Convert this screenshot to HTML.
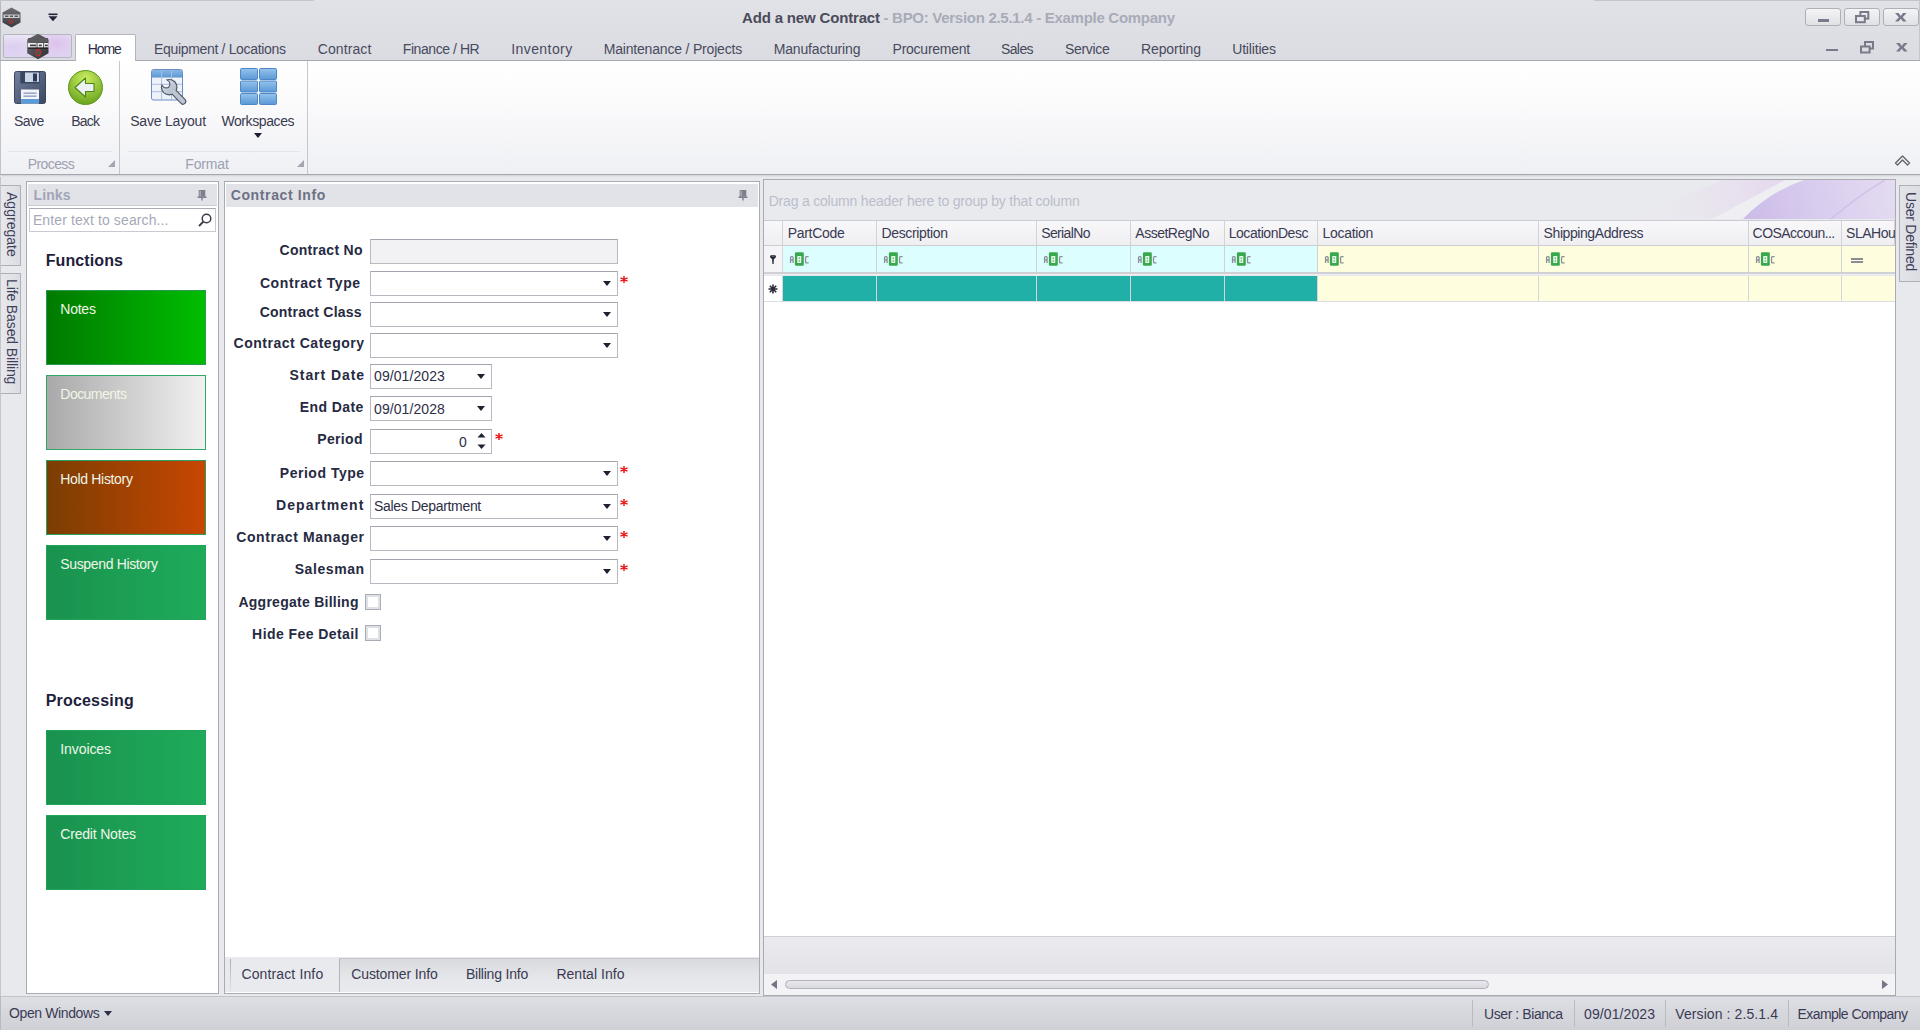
<!DOCTYPE html>
<html><head><meta charset="utf-8"><style>
*{box-sizing:border-box;margin:0;padding:0}
html,body{width:1920px;height:1030px;overflow:hidden}
body{position:relative;background:#e8e9ed;font-family:"Liberation Sans",sans-serif;color:#3b3b50}
.a{position:absolute;white-space:nowrap}
svg.a{overflow:visible}
.wb{top:7.5px;width:36px;height:18.5px;border:1px solid #aeb0b8;border-radius:3px;background:linear-gradient(#f4f4f6,#e0e1e5)}
.gsep{top:61px;width:1px;height:113px;background:#c6c7ce}
.panel{background:#fff;border:1px solid #a9abb3}
.phdr{background:#e2e3e8}
.fld{left:370px;width:248px;height:25px;border:1px solid #b8bac1;border-top-color:#a3a5ae;background:#fff}
.dd{position:absolute;right:6.5px;top:9px;width:0;height:0;border-left:4px solid transparent;border-right:4px solid transparent;border-top:5px solid #202030}
.tile{left:46px;width:160px;height:75px;border:1px solid #2aa860}
.ghdr{top:221px;height:25px;background:linear-gradient(#f8f8fa,#efeff2);border-right:1px solid #d2d3d9;border-bottom:1px solid #cdced4;overflow:hidden}
.gflt{top:246px;height:26px;background:#dcfefe;border-right:1px solid #d0d2d8}
.gnew{top:276px;height:25px;background:#20b0a8;border-right:1px solid #d4d6da}
.abc{position:absolute;left:6px;top:6px}
.ssep{top:1000px;width:1px;height:27px;background:#babbc2}
</style></head><body>
<div class="a" style="left:0;top:0;width:1920px;height:61px;background:linear-gradient(#e1e2e7,#dbdce1);border-left:1px solid #b9bac1"></div><div class="a" style="left:0;top:0;width:314px;height:1px;background:#c4c5cb"></div><div class="a" style="left:1594px;top:0;width:326px;height:1px;background:#c4c5cb"></div>
<svg class="a" style="left:2px;top:7px" width="19" height="21" viewBox="0 0 19 21">
 <defs><linearGradient id="hx1" x1="0" y1="0" x2="0" y2="1"><stop offset="0" stop-color="#707074"/><stop offset="1" stop-color="#3a3a3e"/></linearGradient></defs>
 <polygon points="9.5,0.5 18.5,5.5 18.5,15.5 9.5,20.5 0.5,15.5 0.5,5.5" fill="url(#hx1)"/>
 <rect x="1.5" y="7.5" width="16" height="3.5" fill="#cfcfd2"/>
 <rect x="3" y="8.5" width="3.5" height="1.5" fill="#58585c"/><rect x="8" y="8.5" width="3" height="1.5" fill="#58585c"/><rect x="12.5" y="8.5" width="3.5" height="1.5" fill="#58585c"/>
 <circle cx="8.8" cy="14.6" r="2" fill="#505054" stroke="#c02828" stroke-width="1"/>
</svg>
<svg class="a" style="left:48px;top:13px" width="10" height="9" viewBox="0 0 10 9">
 <rect x="0.5" y="0.5" width="9" height="1.6" fill="#23233a"/><polygon points="0.5,3.2 9.5,3.2 5,8.2" fill="#23233a"/></svg>
<div class="a" style="left:742.00px;top:10.30px;font-size:15px;line-height:1;letter-spacing:-0.168px;color:#4b4b5a;font-weight:bold;">Add a new Contract</div>
<div class="a" style="left:883.50px;top:10.30px;font-size:15px;line-height:1;letter-spacing:-0.285px;color:#a8abb8;font-weight:bold;">- BPO: Version 2.5.1.4 - Example Company</div>
<div class="a wb" style="left:1805px"><div class="a" style="left:11.5px;top:10.5px;width:11.5px;height:2.5px;background:#787a89"></div></div>
<div class="a wb" style="left:1844px"><svg class="a" style="left:10px;top:2.5px" width="15" height="13" viewBox="0 0 15 13"><rect x="5.4" y="1" width="7.9" height="6.6" fill="none" stroke="#787a89" stroke-width="2"/><rect x="1" y="5" width="8.8" height="6.2" fill="#e9e9ed" stroke="#787a89" stroke-width="2"/></svg></div>
<div class="a wb" style="left:1883px"><svg class="a" style="left:11px;top:4px" width="12" height="9" viewBox="0 0 12 9"><polygon points="0,0 3.6,0 5.8,2.9 8,0 11.6,0 7.7,4.3 11.6,8.6 8,8.6 5.8,5.7 3.6,8.6 0,8.6 3.9,4.3" fill="#787a89"/></svg></div>
<div class="a" style="left:1919px;top:0;width:1px;height:60px;background:#c6c7ce"></div>
<div class="a" style="left:0;top:60px;width:1920px;height:1px;background:#a8aab2"></div>
<div class="a" style="left:3px;top:34px;width:69px;height:24px;border:1px solid #b4b6be;border-radius:2px;background:radial-gradient(ellipse 30px 18px at 52px 8px,#dcc2ec 0%,rgba(220,194,236,0) 100%),radial-gradient(ellipse 30px 12px at 10px 12px,#dccdf0 0%,rgba(220,205,240,0) 100%),linear-gradient(#ece6f6,#ddd6f2)"></div>
<svg class="a" style="left:26px;top:33px" width="24" height="27" viewBox="0 0 24 27">
 <defs><linearGradient id="hx2" x1="0" y1="0" x2="1" y2="1"><stop offset="0" stop-color="#6e6e72"/><stop offset="0.6" stop-color="#48484c"/><stop offset="1" stop-color="#2e2e32"/></linearGradient></defs>
 <polygon points="12,0.8 22.5,6.6 22.5,20.2 12,26.2 1.2,20.2 1.2,6.6" fill="url(#hx2)"/>
 <rect x="2" y="5" width="20" height="4" fill="#5a5a5e"/>
 <path d="M1.8 10 H10.5 V14.6 H1.8 Z M11.5 10 H17 V14.6 H11.5 Z M17.8 10 H22.5 V14.6 H17.8 Z" fill="#ededef"/>
 <rect x="4" y="11.6" width="6" height="1.6" fill="#3a3a3e"/><rect x="12.8" y="11.6" width="3" height="1.6" fill="#3a3a3e"/><rect x="18.8" y="11.6" width="3" height="1.6" fill="#3a3a3e"/>
 <rect x="2" y="14.6" width="20" height="1.2" fill="#1e1e22"/>
 <ellipse cx="12.2" cy="19.6" rx="2.2" ry="3.4" fill="#3a5a5c" stroke="#d42828" stroke-width="1.1"/>
</svg>
<div class="a" style="left:75px;top:34px;width:61px;height:27px;background:#fff;border:1px solid #b3b5bd;border-bottom:none;border-radius:2px 2px 0 0"></div>
<div class="a" style="left:87.80px;top:42.05px;font-size:14px;line-height:1;letter-spacing:-1.136px;color:#2e2e48;">Home</div>
<div class="a" style="left:154.10px;top:42.05px;font-size:14px;line-height:1;letter-spacing:-0.337px;color:#474a5e;">Equipment / Locations</div>
<div class="a" style="left:317.80px;top:42.05px;font-size:14px;line-height:1;letter-spacing:0.083px;color:#474a5e;">Contract</div>
<div class="a" style="left:402.80px;top:42.05px;font-size:14px;line-height:1;letter-spacing:-0.437px;color:#474a5e;">Finance / HR</div>
<div class="a" style="left:511.20px;top:42.05px;font-size:14px;line-height:1;letter-spacing:0.426px;color:#474a5e;">Inventory</div>
<div class="a" style="left:603.70px;top:42.05px;font-size:14px;line-height:1;letter-spacing:-0.186px;color:#474a5e;">Maintenance / Projects</div>
<div class="a" style="left:773.70px;top:42.05px;font-size:14px;line-height:1;letter-spacing:-0.160px;color:#474a5e;">Manufacturing</div>
<div class="a" style="left:892.60px;top:42.05px;font-size:14px;line-height:1;letter-spacing:-0.256px;color:#474a5e;">Procurement</div>
<div class="a" style="left:1000.90px;top:42.05px;font-size:14px;line-height:1;letter-spacing:-0.583px;color:#474a5e;">Sales</div>
<div class="a" style="left:1065.00px;top:42.05px;font-size:14px;line-height:1;letter-spacing:-0.315px;color:#474a5e;">Service</div>
<div class="a" style="left:1140.90px;top:42.05px;font-size:14px;line-height:1;letter-spacing:-0.075px;color:#474a5e;">Reporting</div>
<div class="a" style="left:1232.20px;top:42.05px;font-size:14px;line-height:1;letter-spacing:-0.166px;color:#474a5e;">Utilities</div>
<div class="a" style="left:1826px;top:48.5px;width:12px;height:2.5px;background:#787a89"></div>
<svg class="a" style="left:1860px;top:41px" width="14" height="13" viewBox="0 0 14 13"><rect x="5" y="1" width="8" height="6.5" fill="none" stroke="#787a89" stroke-width="2"/><rect x="1" y="5.5" width="8.6" height="6" fill="#dcdde2" stroke="#787a89" stroke-width="2"/></svg>
<svg class="a" style="left:1896px;top:42.5px" width="12" height="9" viewBox="0 0 12 9"><polygon points="0,0 3.6,0 5.8,2.9 8,0 11.6,0 7.7,4.3 11.6,8.6 8,8.6 5.8,5.7 3.6,8.6 0,8.6 3.9,4.3" fill="#787a89"/></svg>
<div class="a" style="left:0;top:61px;width:1920px;height:114px;background:linear-gradient(#ffffff 0%,#fbfbfc 35%,#eff0f4 100%);border-bottom:1px solid #a5a7af;border-left:1px solid #c2c3ca"></div><div class="a" style="left:0;top:175px;width:1920px;height:2px;background:linear-gradient(#d0d1d7,#e8e9ed)"></div>
<div class="a gsep" style="left:119px"></div><div class="a gsep" style="left:307px"></div>
<div class="a" style="left:8px;top:151px;width:104px;height:1px;background:#e4e5ea"></div>
<div class="a" style="left:128px;top:151px;width:172px;height:1px;background:#e4e5ea"></div>
<div class="a" style="left:27.80px;top:156.75px;font-size:14px;line-height:1;letter-spacing:-0.613px;color:#9ca1b1;">Process</div>
<div class="a" style="left:185.30px;top:157.05px;font-size:14px;line-height:1;letter-spacing:-0.169px;color:#9ca1b1;">Format</div>
<svg class="a" style="left:108px;top:160px" width="7" height="7"><polygon points="7,0 7,7 0,7" fill="#a3a6b1"/></svg>
<svg class="a" style="left:297px;top:160px" width="7" height="7"><polygon points="7,0 7,7 0,7" fill="#a3a6b1"/></svg>
<svg class="a" style="left:14px;top:71px" width="32" height="33" viewBox="0 0 32 33">
 <defs><linearGradient id="sg" x1="0" y1="0" x2="1" y2="1"><stop offset="0" stop-color="#74839f"/><stop offset="0.5" stop-color="#56637f"/><stop offset="1" stop-color="#3c4764"/></linearGradient></defs>
 <rect x="0.5" y="0.5" width="31" height="32" rx="2" fill="url(#sg)" stroke="#3a4662"/>
 <rect x="6.3" y="0.5" width="19.6" height="12" rx="1" fill="#3a4564"/>
 <rect x="11" y="1.5" width="13.9" height="9.5" fill="#cad5e6"/>
 <rect x="19" y="2.5" width="4" height="8" fill="#2c3858"/>
 <rect x="7" y="18.5" width="18" height="14" fill="#f2f4f8"/>
 <rect x="9.5" y="21.5" width="13" height="1.3" fill="#8595c0"/><rect x="9.5" y="24.5" width="13" height="1.3" fill="#8595c0"/>
 <rect x="7" y="28" width="18" height="4.5" fill="#5b9bd8"/>
</svg>
<svg class="a" style="left:68px;top:70px" width="36" height="36" viewBox="0 0 36 36">
 <defs><radialGradient id="bkg" cx="0.5" cy="0.25" r="0.75"><stop offset="0" stop-color="#cdee62"/><stop offset="1" stop-color="#6aa41e"/></radialGradient></defs>
 <circle cx="17.5" cy="17.5" r="17" fill="url(#bkg)" stroke="#5a961a"/>
 <path d="M7 17.5 L17.5 8 L17.5 13.5 L26 13.5 L26 21.5 L17.5 21.5 L17.5 27 Z" fill="#edf1f4" stroke="#4a8616" stroke-width="1.1" stroke-linejoin="round"/>
</svg>
<div class="a" style="left:14.10px;top:114.45px;font-size:14px;line-height:1;letter-spacing:-0.591px;color:#3a3a50;">Save</div>
<div class="a" style="left:71.20px;top:114.45px;font-size:14px;line-height:1;letter-spacing:-0.742px;color:#3a3a50;">Back</div>
<svg class="a" style="left:150px;top:68px" width="38" height="38" viewBox="0 0 38 38">
 <defs>
  <linearGradient id="slh" x1="0" y1="0" x2="0" y2="1"><stop offset="0" stop-color="#86b8e6"/><stop offset="1" stop-color="#5f9ad6"/></linearGradient>
  <mask id="wm1" maskUnits="userSpaceOnUse" x="0" y="0" width="38" height="38"><rect width="38" height="38" fill="#fff"/><circle cx="16.2" cy="16.2" r="3.1" fill="#000"/><polygon points="14,18.4 18.4,14 10,5.6 5.6,10" fill="#000"/></mask>
  <mask id="wm2" maskUnits="userSpaceOnUse" x="0" y="0" width="38" height="38"><rect width="38" height="38" fill="#fff"/><circle cx="16.2" cy="16.2" r="4.2" fill="#000"/><polygon points="13.2,19.2 19.2,13.2 10.5,4.5 4.5,10.5" fill="#000"/></mask>
  <linearGradient id="wrg" x1="0" y1="0" x2="1" y2="1"><stop offset="0" stop-color="#e2e8ee"/><stop offset="1" stop-color="#a8b2c0"/></linearGradient>
 </defs>
 <rect x="1.5" y="1.5" width="31" height="30.5" rx="2" fill="#eef2f9" stroke="#6e8cc6"/>
 <path d="M2 2 H32 V9 H2 Z" fill="url(#slh)"/>
 <path d="M2 9.5 H32 M2 16.3 H32 M2 23.7 H32 M11.6 2 V31.5 M21.5 2 V31.5" stroke="#a9bedc" stroke-width="1"/>
 <g mask="url(#wm1)" fill="#4e5666" stroke="#4e5666">
  <circle cx="19.2" cy="19.2" r="8.3" stroke="none"/>
  <line x1="19.2" y1="19.2" x2="33" y2="33.4" stroke-width="6.6" stroke-linecap="round"/>
 </g>
 <g mask="url(#wm2)" fill="url(#wrg)" stroke="#bcc5d1">
  <circle cx="19.2" cy="19.2" r="7.1" stroke="none"/>
  <line x1="19.2" y1="19.2" x2="33" y2="33.4" stroke-width="4.4" stroke-linecap="round"/>
 </g>
</svg>
<svg class="a" style="left:240px;top:68px" width="37" height="37" viewBox="0 0 37 37">
 <defs><linearGradient id="wg" x1="0" y1="0" x2="0" y2="1"><stop offset="0" stop-color="#95c4ec"/><stop offset="1" stop-color="#5a98d6"/></linearGradient></defs>
 <g fill="url(#wg)" stroke="#4f88c8" stroke-width="1">
 <rect x="0.5" y="0.5" width="17" height="11" rx="1"/><rect x="19.5" y="0.5" width="17" height="11" rx="1"/>
 <rect x="0.5" y="13" width="17" height="11" rx="1"/><rect x="19.5" y="13" width="17" height="11" rx="1"/>
 <rect x="0.5" y="25.5" width="17" height="11" rx="1"/><rect x="19.5" y="25.5" width="17" height="11" rx="1"/>
 </g></svg>
<div class="a" style="left:130.20px;top:114.45px;font-size:14px;line-height:1;letter-spacing:-0.194px;color:#3a3a50;">Save Layout</div>
<div class="a" style="left:221.40px;top:114.45px;font-size:14px;line-height:1;letter-spacing:-0.398px;color:#3a3a50;">Workspaces</div>
<svg class="a" style="left:254px;top:133px" width="8" height="5"><polygon points="0,0 8,0 4,5" fill="#1e1e2e"/></svg>
<svg class="a" style="left:1894px;top:154px" width="17" height="13" viewBox="0 0 17 13"><path d="M1.5 9 L8.5 2 L15.5 9 L13.5 11 L8.5 6 L3.5 11 Z" fill="none" stroke="#62646f" stroke-width="1.4" stroke-linejoin="round"/></svg>
<div class="a" style="left:0;top:185px;width:21px;height:81px;background:linear-gradient(90deg,#e8e9ed,#dcdde2);border:1px solid #aeb0b8;border-left:none"></div>
<div class="a" style="left:0;top:273px;width:21px;height:121px;background:linear-gradient(90deg,#e8e9ed,#dcdde2);border:1px solid #aeb0b8;border-left:none"></div>
<div class="a" style="left:4.5px;top:192px;writing-mode:vertical-rl;font-size:14px;line-height:14px;letter-spacing:0.02px;color:#40405a">Aggregate</div>
<div class="a" style="left:4.5px;top:279px;writing-mode:vertical-rl;font-size:14px;line-height:14px;letter-spacing:-0.12px;color:#40405a">Life Based Billing</div>
<div class="a" style="left:0;top:177px;width:1px;height:819px;background:#c4c5cc"></div>
<div class="a panel" style="left:26px;top:181px;width:193px;height:813px"></div>
<div class="a phdr" style="left:28px;top:184px;width:189px;height:22px;border-bottom:1px solid #c9cbd1"></div>
<div class="a" style="left:33.50px;top:187.95px;font-size:14px;line-height:1;letter-spacing:0.105px;color:#a1a6b6;font-weight:bold;">Links</div>
<svg class="a" style="left:197px;top:190px" width="10" height="11" viewBox="0 0 10 11"><rect x="1.7" y="0" width="6.6" height="6.6" fill="#7c7f8c"/><rect x="2.6" y="0.8" width="1.2" height="5" fill="#b4b7c2"/><rect x="0.6" y="6.4" width="8.8" height="1.6" fill="#7c7f8c"/><rect x="4.3" y="7.5" width="1.4" height="3" fill="#7c7f8c"/></svg>
<div class="a" style="left:29px;top:208px;width:187px;height:24px;background:#fff;border:1px solid #c8cad0;border-top-color:#a9abb3"></div>
<div class="a" style="left:32.90px;top:212.95px;font-size:14px;line-height:1;letter-spacing:0.115px;color:#a5a9b7;">Enter text to search...</div>
<svg class="a" style="left:198px;top:213px" width="14" height="14" viewBox="0 0 14 14"><circle cx="8.5" cy="5.5" r="4.3" fill="none" stroke="#3c3e4a" stroke-width="1.5"/><path d="M5.5 8.5 L1 13" stroke="#3c3e4a" stroke-width="1.8"/></svg>
<div class="a" style="left:45.70px;top:252.66px;font-size:16px;line-height:1;letter-spacing:0.108px;color:#1e1e3c;font-weight:bold;">Functions</div>
<div class="a" style="left:45.70px;top:693.26px;font-size:16px;line-height:1;letter-spacing:0.193px;color:#1e1e3c;font-weight:bold;">Processing</div>
<div class="a tile" style="top:290px;background:linear-gradient(90deg,#007a00,#00bd00);border-color:#2a9a50"></div>
<div class="a" style="left:60.30px;top:301.90px;font-size:14px;line-height:1;letter-spacing:-0.245px;color:#f0f6e8;">Notes</div>
<div class="a tile" style="top:375px;background:linear-gradient(90deg,#a9a9a9,#f1f1f1);border-color:#30a868"></div>
<div class="a" style="left:60.30px;top:386.90px;font-size:14px;line-height:1;letter-spacing:-0.527px;color:#f0f6e8;">Documents</div>
<div class="a tile" style="top:460px;background:linear-gradient(90deg,#7a3e02,#c84602);border-color:#2aa060"></div>
<div class="a" style="left:60.30px;top:471.90px;font-size:14px;line-height:1;letter-spacing:-0.332px;color:#f0f6e8;">Hold History</div>
<div class="a tile" style="top:545px;background:linear-gradient(90deg,#19924e,#1fab5b);border-color:#1fa458"></div>
<div class="a" style="left:60.30px;top:556.90px;font-size:14px;line-height:1;letter-spacing:-0.351px;color:#f0f6e8;">Suspend History</div>
<div class="a tile" style="top:730px;background:linear-gradient(90deg,#19924e,#1fab5b);border-color:#1fa458"></div>
<div class="a" style="left:60.30px;top:741.90px;font-size:14px;line-height:1;letter-spacing:-0.094px;color:#f0f6e8;">Invoices</div>
<div class="a tile" style="top:815px;background:linear-gradient(90deg,#19924e,#1fab5b);border-color:#1fa458"></div>
<div class="a" style="left:60.30px;top:826.90px;font-size:14px;line-height:1;letter-spacing:-0.192px;color:#f0f6e8;">Credit Notes</div>
<div class="a panel" style="left:224px;top:181px;width:536px;height:813px"></div>
<div class="a phdr" style="left:226px;top:184px;width:532px;height:23px"></div>
<div class="a" style="left:230.70px;top:187.95px;font-size:14px;line-height:1;letter-spacing:0.624px;color:#6d7284;font-weight:bold;">Contract Info</div>
<svg class="a" style="left:738px;top:190px" width="10" height="11" viewBox="0 0 10 11"><rect x="1.7" y="0" width="6.6" height="6.6" fill="#7c7f8c"/><rect x="2.6" y="0.8" width="1.2" height="5" fill="#b4b7c2"/><rect x="0.6" y="6.4" width="8.8" height="1.6" fill="#7c7f8c"/><rect x="4.3" y="7.5" width="1.4" height="3" fill="#7c7f8c"/></svg>
<div class="a" style="left:279.50px;top:242.95px;font-size:14px;line-height:1;letter-spacing:0.287px;color:#262a42;font-weight:bold;">Contract No</div>
<div class="a" style="left:259.90px;top:275.65px;font-size:14px;line-height:1;letter-spacing:0.592px;color:#262a42;font-weight:bold;">Contract Type</div>
<div class="a" style="left:259.70px;top:305.35px;font-size:14px;line-height:1;letter-spacing:0.238px;color:#262a42;font-weight:bold;">Contract Class</div>
<div class="a" style="left:233.50px;top:336.15px;font-size:14px;line-height:1;letter-spacing:0.529px;color:#262a42;font-weight:bold;">Contract Category</div>
<div class="a" style="left:289.50px;top:367.55px;font-size:14px;line-height:1;letter-spacing:0.940px;color:#262a42;font-weight:bold;">Start Date</div>
<div class="a" style="left:299.80px;top:400.25px;font-size:14px;line-height:1;letter-spacing:0.416px;color:#262a42;font-weight:bold;">End Date</div>
<div class="a" style="left:317.20px;top:432.25px;font-size:14px;line-height:1;letter-spacing:0.364px;color:#262a42;font-weight:bold;">Period</div>
<div class="a" style="left:279.80px;top:465.85px;font-size:14px;line-height:1;letter-spacing:0.521px;color:#262a42;font-weight:bold;">Period Type</div>
<div class="a" style="left:276.00px;top:498.05px;font-size:14px;line-height:1;letter-spacing:1.067px;color:#262a42;font-weight:bold;">Department</div>
<div class="a" style="left:236.20px;top:530.15px;font-size:14px;line-height:1;letter-spacing:0.591px;color:#262a42;font-weight:bold;">Contract Manager</div>
<div class="a" style="left:294.70px;top:562.45px;font-size:14px;line-height:1;letter-spacing:0.575px;color:#262a42;font-weight:bold;">Salesman</div>
<div class="a" style="left:238.40px;top:595.25px;font-size:14px;line-height:1;letter-spacing:0.262px;color:#262a42;font-weight:bold;">Aggregate Billing</div>
<div class="a" style="left:252.10px;top:626.75px;font-size:14px;line-height:1;letter-spacing:0.430px;color:#262a42;font-weight:bold;">Hide Fee Detail</div>
<div class="a fld" style="top:239px;background:#f2f2f4"></div>
<div class="a fld" style="top:271px;width:248px"><div class="dd"></div></div>
<svg class="a" style="left:620px;top:276px" width="8" height="7" viewBox="0 0 8 7"><path d="M4 0 V7 M0.5 1.8 L7.5 5.2 M7.5 1.8 L0.5 5.2" stroke="#f01818" stroke-width="1.5"/></svg>
<div class="a fld" style="top:302px;width:248px"><div class="dd"></div></div>
<div class="a fld" style="top:333px;width:248px"><div class="dd"></div></div>
<div class="a fld" style="top:364px;width:122px"><div class="dd"></div></div>
<div class="a fld" style="top:396px;width:122px"><div class="dd"></div></div>
<div class="a fld" style="top:461px;width:248px"><div class="dd"></div></div>
<svg class="a" style="left:620px;top:466px" width="8" height="7" viewBox="0 0 8 7"><path d="M4 0 V7 M0.5 1.8 L7.5 5.2 M7.5 1.8 L0.5 5.2" stroke="#f01818" stroke-width="1.5"/></svg>
<div class="a fld" style="top:494px;width:248px"><div class="dd"></div></div>
<svg class="a" style="left:620px;top:499px" width="8" height="7" viewBox="0 0 8 7"><path d="M4 0 V7 M0.5 1.8 L7.5 5.2 M7.5 1.8 L0.5 5.2" stroke="#f01818" stroke-width="1.5"/></svg>
<div class="a fld" style="top:526px;width:248px"><div class="dd"></div></div>
<svg class="a" style="left:620px;top:531px" width="8" height="7" viewBox="0 0 8 7"><path d="M4 0 V7 M0.5 1.8 L7.5 5.2 M7.5 1.8 L0.5 5.2" stroke="#f01818" stroke-width="1.5"/></svg>
<div class="a fld" style="top:559px;width:248px"><div class="dd"></div></div>
<svg class="a" style="left:620px;top:564px" width="8" height="7" viewBox="0 0 8 7"><path d="M4 0 V7 M0.5 1.8 L7.5 5.2 M7.5 1.8 L0.5 5.2" stroke="#f01818" stroke-width="1.5"/></svg>
<div class="a fld" style="top:429px;width:122px"></div>
<svg class="a" style="left:477px;top:432px" width="9" height="18" viewBox="0 0 9 18"><polygon points="0.5,5.5 8.5,5.5 4.5,1" fill="#202030"/><polygon points="0.5,12.5 8.5,12.5 4.5,17" fill="#202030"/></svg>
<svg class="a" style="left:495px;top:433px" width="8" height="7" viewBox="0 0 8 7"><path d="M4 0 V7 M0.5 1.8 L7.5 5.2 M7.5 1.8 L0.5 5.2" stroke="#f01818" stroke-width="1.5"/></svg>
<div class="a" style="left:374.10px;top:369.25px;font-size:14px;line-height:1;letter-spacing:0.069px;color:#2e2e46;">09/01/2023</div>
<div class="a" style="left:374.10px;top:401.75px;font-size:14px;line-height:1;letter-spacing:0.069px;color:#2e2e46;">09/01/2028</div>
<div class="a" style="left:459.00px;top:434.55px;font-size:14px;line-height:1;letter-spacing:0.203px;color:#2e2e46;">0</div>
<div class="a" style="left:374.10px;top:499.05px;font-size:14px;line-height:1;letter-spacing:-0.328px;color:#2e2e46;">Sales Department</div>
<div class="a" style="left:365px;top:594px;width:16px;height:16px;border:1px solid #a9abb5;background:#fff;box-shadow:inset 0 0 0 2px #dfe1e8"></div>
<div class="a" style="left:365px;top:625px;width:16px;height:16px;border:1px solid #a9abb5;background:#fff;box-shadow:inset 0 0 0 2px #dfe1e8"></div>
<div class="a" style="left:225px;top:957px;width:534px;height:35px;background:#e9eaee"></div>
<div class="a" style="left:339px;top:958px;width:420px;height:34px;background:linear-gradient(#d9dade,#e6e7eb 60%,#e9eaee);border-top:1px solid #c4c6cc;border-left:1px solid #b4b6bd"></div>
<div class="a" style="left:230px;top:959px;width:1px;height:32px;background:linear-gradient(#a9abb3,#e0e1e6)"></div>
<div class="a" style="left:241.40px;top:966.85px;font-size:14px;line-height:1;letter-spacing:0.137px;color:#3a3a52;">Contract Info</div>
<div class="a" style="left:351.30px;top:966.85px;font-size:14px;line-height:1;letter-spacing:-0.120px;color:#3a3a52;">Customer Info</div>
<div class="a" style="left:465.90px;top:966.85px;font-size:14px;line-height:1;letter-spacing:-0.209px;color:#3a3a52;">Billing Info</div>
<div class="a" style="left:556.40px;top:966.85px;font-size:14px;line-height:1;letter-spacing:0.038px;color:#3a3a52;">Rental Info</div>
<div class="a" style="left:763px;top:179px;width:1133px;height:817px;background:#fff;border:1px solid #a9abb3"></div>
<div class="a" style="left:764px;top:180px;width:1131px;height:40px;background:#e9eaee;overflow:hidden">
 <svg class="a" style="left:0;top:0" width="1131" height="39" viewBox="0 0 1131 39">
  <defs>
   <linearGradient id="pk" x1="860" y1="39" x2="1030" y2="0" gradientUnits="userSpaceOnUse"><stop offset="0" stop-color="#e9eaee" stop-opacity="0"/><stop offset="1" stop-color="#e6d4ee"/></linearGradient>
   <linearGradient id="pu" x1="980" y1="39" x2="1131" y2="0" gradientUnits="userSpaceOnUse"><stop offset="0" stop-color="#cbbbe8"/><stop offset="0.45" stop-color="#d8cbee"/><stop offset="1" stop-color="#e4dcf1"/></linearGradient>
  </defs>
  <polygon points="860,39 960,0 1025,0 948,39" fill="url(#pk)"/>
  <polygon points="948,39 1021,0 1040,0 979,39" fill="#efeff3"/>
  <path d="M979 39 Q1005 12 1040 0 L1131 0 L1131 39 Z" fill="url(#pu)"/>
  <path d="M1067 39 Q1095 15 1121 0" stroke="#cdbde6" stroke-width="1.5" fill="none" opacity="0.8"/>
 </svg></div>
<div class="a" style="left:768.70px;top:193.95px;font-size:14px;line-height:1;letter-spacing:-0.201px;color:#babecb;">Drag a column header here to group by that column</div>
<div class="a" style="left:764px;top:220px;width:1131px;height:1px;background:#cbccd3"></div>
<div class="a ghdr" style="left:764px;width:19px"></div>
<div class="a ghdr" style="left:783px;width:94px"></div>
<div class="a" style="left:787.80px;top:225.65px;font-size:14px;line-height:1;letter-spacing:-0.322px;color:#3a3a52;">PartCode</div>
<div class="a ghdr" style="left:877px;width:160px"></div>
<div class="a" style="left:881.50px;top:225.65px;font-size:14px;line-height:1;letter-spacing:-0.353px;color:#3a3a52;">Description</div>
<div class="a ghdr" style="left:1037px;width:94px"></div>
<div class="a" style="left:1041.20px;top:225.65px;font-size:14px;line-height:1;letter-spacing:-0.629px;color:#3a3a52;">SerialNo</div>
<div class="a ghdr" style="left:1131px;width:94px"></div>
<div class="a" style="left:1135.30px;top:225.65px;font-size:14px;line-height:1;letter-spacing:-0.488px;color:#3a3a52;">AssetRegNo</div>
<div class="a ghdr" style="left:1225px;width:93px"></div>
<div class="a" style="left:1228.70px;top:225.65px;font-size:14px;line-height:1;letter-spacing:-0.457px;color:#3a3a52;">LocationDesc</div>
<div class="a ghdr" style="left:1318px;width:221px"></div>
<div class="a" style="left:1322.40px;top:225.65px;font-size:14px;line-height:1;letter-spacing:-0.277px;color:#3a3a52;">Location</div>
<div class="a ghdr" style="left:1539px;width:210px"></div>
<div class="a" style="left:1543.60px;top:225.65px;font-size:14px;line-height:1;letter-spacing:-0.419px;color:#3a3a52;">ShippingAddress</div>
<div class="a ghdr" style="left:1749px;width:93px"></div>
<div class="a" style="left:1752.60px;top:225.65px;font-size:14px;line-height:1;letter-spacing:-0.555px;color:#3a3a52;">COSAccoun...</div>
<div class="a ghdr" style="left:1842px;width:53px"></div>
<div class="a" style="left:1842px;top:221px;width:53px;height:24px;overflow:hidden"><div class="a" style="left:4px;top:4.65px;font-size:14px;line-height:1;letter-spacing:-0.45px;color:#3a3a52">SLAHours</div></div>
<div class="a gflt" style="left:764px;width:19px;background:#f5f5f7;border-right:1px solid #d6d7dc"></div>
<svg class="a" style="left:769px;top:254px" width="8" height="11" viewBox="0 0 8 11"><path d="M1 2.3 Q1 1 4 1 Q7 1 7 2.3 Q7 4.6 4.9 5 L4.6 10 H3.4 L3.1 5 Q1 4.6 1 2.3 Z" fill="#242634"/><rect x="2.6" y="1.6" width="2.8" height="0.9" fill="#8a8c98"/></svg>
<div class="a gnew" style="left:764px;width:19px;background:#fff;border-right:1px solid #d6d7dc"></div>
<svg class="a" style="left:768px;top:284px" width="10" height="10" viewBox="0 0 10 10"><path d="M5 0.5 V9.5 M0.5 5 H9.5 M1.8 1.8 L8.2 8.2 M8.2 1.8 L1.8 8.2" stroke="#2a2c38" stroke-width="1.6"/></svg>
<div class="a gflt" style="left:783px;width:94px;background:#dcfefe;"><svg class="abc" width="20" height="14" viewBox="0 0 20 14"><path d="M1.55 11 V5.6 Q1.55 4.6 2.6 4.6 H3.1 Q4.1 4.6 4.1 5.6 V11 M1.55 8 H4.1" fill="none" stroke="#8c8e98" stroke-width="1.3"/><rect x="5.9" y="0.3" width="8.9" height="13.5" rx="1.3" fill="#38a84c"/><rect x="8.2" y="4" width="4.1" height="7" rx="0.4" fill="#e8f6ea"/><rect x="9.7" y="5.4" width="1.1" height="1.4" fill="#38a84c"/><rect x="9.7" y="8.2" width="1.1" height="1.4" fill="#38a84c"/><path d="M19.6 4.65 H17.3 Q16.55 4.65 16.55 5.5 V10 Q16.55 10.9 17.3 10.9 H19.6" fill="none" stroke="#8c8e98" stroke-width="1.3"/></svg></div>
<div class="a gnew" style="left:783px;width:94px;background:#21b0a8;"></div>
<div class="a gflt" style="left:877px;width:160px;background:#dcfefe;"><svg class="abc" width="20" height="14" viewBox="0 0 20 14"><path d="M1.55 11 V5.6 Q1.55 4.6 2.6 4.6 H3.1 Q4.1 4.6 4.1 5.6 V11 M1.55 8 H4.1" fill="none" stroke="#8c8e98" stroke-width="1.3"/><rect x="5.9" y="0.3" width="8.9" height="13.5" rx="1.3" fill="#38a84c"/><rect x="8.2" y="4" width="4.1" height="7" rx="0.4" fill="#e8f6ea"/><rect x="9.7" y="5.4" width="1.1" height="1.4" fill="#38a84c"/><rect x="9.7" y="8.2" width="1.1" height="1.4" fill="#38a84c"/><path d="M19.6 4.65 H17.3 Q16.55 4.65 16.55 5.5 V10 Q16.55 10.9 17.3 10.9 H19.6" fill="none" stroke="#8c8e98" stroke-width="1.3"/></svg></div>
<div class="a gnew" style="left:877px;width:160px;background:#21b0a8;"></div>
<div class="a gflt" style="left:1037px;width:94px;background:#dcfefe;"><svg class="abc" width="20" height="14" viewBox="0 0 20 14"><path d="M1.55 11 V5.6 Q1.55 4.6 2.6 4.6 H3.1 Q4.1 4.6 4.1 5.6 V11 M1.55 8 H4.1" fill="none" stroke="#8c8e98" stroke-width="1.3"/><rect x="5.9" y="0.3" width="8.9" height="13.5" rx="1.3" fill="#38a84c"/><rect x="8.2" y="4" width="4.1" height="7" rx="0.4" fill="#e8f6ea"/><rect x="9.7" y="5.4" width="1.1" height="1.4" fill="#38a84c"/><rect x="9.7" y="8.2" width="1.1" height="1.4" fill="#38a84c"/><path d="M19.6 4.65 H17.3 Q16.55 4.65 16.55 5.5 V10 Q16.55 10.9 17.3 10.9 H19.6" fill="none" stroke="#8c8e98" stroke-width="1.3"/></svg></div>
<div class="a gnew" style="left:1037px;width:94px;background:#21b0a8;"></div>
<div class="a gflt" style="left:1131px;width:94px;background:#dcfefe;"><svg class="abc" width="20" height="14" viewBox="0 0 20 14"><path d="M1.55 11 V5.6 Q1.55 4.6 2.6 4.6 H3.1 Q4.1 4.6 4.1 5.6 V11 M1.55 8 H4.1" fill="none" stroke="#8c8e98" stroke-width="1.3"/><rect x="5.9" y="0.3" width="8.9" height="13.5" rx="1.3" fill="#38a84c"/><rect x="8.2" y="4" width="4.1" height="7" rx="0.4" fill="#e8f6ea"/><rect x="9.7" y="5.4" width="1.1" height="1.4" fill="#38a84c"/><rect x="9.7" y="8.2" width="1.1" height="1.4" fill="#38a84c"/><path d="M19.6 4.65 H17.3 Q16.55 4.65 16.55 5.5 V10 Q16.55 10.9 17.3 10.9 H19.6" fill="none" stroke="#8c8e98" stroke-width="1.3"/></svg></div>
<div class="a gnew" style="left:1131px;width:94px;background:#21b0a8;"></div>
<div class="a gflt" style="left:1225px;width:93px;background:#dcfefe;"><svg class="abc" width="20" height="14" viewBox="0 0 20 14"><path d="M1.55 11 V5.6 Q1.55 4.6 2.6 4.6 H3.1 Q4.1 4.6 4.1 5.6 V11 M1.55 8 H4.1" fill="none" stroke="#8c8e98" stroke-width="1.3"/><rect x="5.9" y="0.3" width="8.9" height="13.5" rx="1.3" fill="#38a84c"/><rect x="8.2" y="4" width="4.1" height="7" rx="0.4" fill="#e8f6ea"/><rect x="9.7" y="5.4" width="1.1" height="1.4" fill="#38a84c"/><rect x="9.7" y="8.2" width="1.1" height="1.4" fill="#38a84c"/><path d="M19.6 4.65 H17.3 Q16.55 4.65 16.55 5.5 V10 Q16.55 10.9 17.3 10.9 H19.6" fill="none" stroke="#8c8e98" stroke-width="1.3"/></svg></div>
<div class="a gnew" style="left:1225px;width:93px;background:#21b0a8;"></div>
<div class="a gflt" style="left:1318px;width:221px;background:#fefede;"><svg class="abc" width="20" height="14" viewBox="0 0 20 14"><path d="M1.55 11 V5.6 Q1.55 4.6 2.6 4.6 H3.1 Q4.1 4.6 4.1 5.6 V11 M1.55 8 H4.1" fill="none" stroke="#8c8e98" stroke-width="1.3"/><rect x="5.9" y="0.3" width="8.9" height="13.5" rx="1.3" fill="#38a84c"/><rect x="8.2" y="4" width="4.1" height="7" rx="0.4" fill="#e8f6ea"/><rect x="9.7" y="5.4" width="1.1" height="1.4" fill="#38a84c"/><rect x="9.7" y="8.2" width="1.1" height="1.4" fill="#38a84c"/><path d="M19.6 4.65 H17.3 Q16.55 4.65 16.55 5.5 V10 Q16.55 10.9 17.3 10.9 H19.6" fill="none" stroke="#8c8e98" stroke-width="1.3"/></svg></div>
<div class="a gnew" style="left:1318px;width:221px;background:#fefede;"></div>
<div class="a gflt" style="left:1539px;width:210px;background:#fefede;"><svg class="abc" width="20" height="14" viewBox="0 0 20 14"><path d="M1.55 11 V5.6 Q1.55 4.6 2.6 4.6 H3.1 Q4.1 4.6 4.1 5.6 V11 M1.55 8 H4.1" fill="none" stroke="#8c8e98" stroke-width="1.3"/><rect x="5.9" y="0.3" width="8.9" height="13.5" rx="1.3" fill="#38a84c"/><rect x="8.2" y="4" width="4.1" height="7" rx="0.4" fill="#e8f6ea"/><rect x="9.7" y="5.4" width="1.1" height="1.4" fill="#38a84c"/><rect x="9.7" y="8.2" width="1.1" height="1.4" fill="#38a84c"/><path d="M19.6 4.65 H17.3 Q16.55 4.65 16.55 5.5 V10 Q16.55 10.9 17.3 10.9 H19.6" fill="none" stroke="#8c8e98" stroke-width="1.3"/></svg></div>
<div class="a gnew" style="left:1539px;width:210px;background:#fefede;"></div>
<div class="a gflt" style="left:1749px;width:93px;background:#fefede;"><svg class="abc" width="20" height="14" viewBox="0 0 20 14"><path d="M1.55 11 V5.6 Q1.55 4.6 2.6 4.6 H3.1 Q4.1 4.6 4.1 5.6 V11 M1.55 8 H4.1" fill="none" stroke="#8c8e98" stroke-width="1.3"/><rect x="5.9" y="0.3" width="8.9" height="13.5" rx="1.3" fill="#38a84c"/><rect x="8.2" y="4" width="4.1" height="7" rx="0.4" fill="#e8f6ea"/><rect x="9.7" y="5.4" width="1.1" height="1.4" fill="#38a84c"/><rect x="9.7" y="8.2" width="1.1" height="1.4" fill="#38a84c"/><path d="M19.6 4.65 H17.3 Q16.55 4.65 16.55 5.5 V10 Q16.55 10.9 17.3 10.9 H19.6" fill="none" stroke="#8c8e98" stroke-width="1.3"/></svg></div>
<div class="a gnew" style="left:1749px;width:93px;background:#fefede;"></div>
<div class="a gflt" style="left:1842px;width:53px;background:#fefede;border-right:none;"><div class="a" style="left:9px;top:12px;width:12px;height:1.5px;background:#8a8c96"></div><div class="a" style="left:9px;top:15px;width:12px;height:1.5px;background:#8a8c96"></div></div>
<div class="a gnew" style="left:1842px;width:53px;background:#fefede;border-right:none;"></div>
<div class="a" style="left:764px;top:272px;width:1131px;height:4px;background:linear-gradient(#d0d1d7 0,#d0d1d7 2px,#f2f2f5 2px,#e4e5e9 4px)"></div>
<div class="a" style="left:764px;top:301px;width:1131px;height:1px;background:#dcdde2"></div>
<div class="a" style="left:764px;top:936px;width:1131px;height:38px;background:linear-gradient(#ebebef,#e2e2e7);border-top:1px solid #cfd0d6"></div>
<div class="a" style="left:764px;top:974px;width:1131px;height:21px;background:#f3f3f6"></div>
<svg class="a" style="left:771px;top:980px" width="6" height="9"><polygon points="6,0 6,9 0,4.5" fill="#747684"/></svg>
<svg class="a" style="left:1882px;top:980px" width="6" height="9"><polygon points="0,0 0,9 6,4.5" fill="#747684"/></svg>
<div class="a" style="left:785px;top:980px;width:704px;height:9px;border-radius:5px;border:1px solid #b1b3bb;background:linear-gradient(#e8e8ec,#d9dadf)"></div>
<div class="a" style="left:1899px;top:185px;width:21px;height:97px;background:linear-gradient(90deg,#e2e3e8,#dcdde2);border:1px solid #aeb0b8;border-right:none"></div>
<div class="a" style="left:1903.5px;top:191.5px;writing-mode:vertical-rl;font-size:14px;line-height:14px;letter-spacing:-0.22px;color:#40405a">User Defined</div>
<div class="a" style="left:0;top:996px;width:1920px;height:34px;background:linear-gradient(#dedfe4,#cfd0d5);border-top:1px solid #c3c4cb;border-left:1px solid #b9bac1"></div>
<div class="a" style="left:9.10px;top:1006.45px;font-size:14px;line-height:1;letter-spacing:-0.394px;color:#3a3a55;">Open Windows</div>
<svg class="a" style="left:104px;top:1011px" width="8" height="5"><polygon points="0,0 8,0 4,5" fill="#2e2e48"/></svg>
<div class="a ssep" style="left:1472px"></div>
<div class="a ssep" style="left:1574px"></div>
<div class="a ssep" style="left:1665px"></div>
<div class="a ssep" style="left:1788px"></div>
<div class="a" style="left:1484.00px;top:1006.90px;font-size:14px;line-height:1;letter-spacing:-0.421px;color:#3a3a55;">User : Bianca</div>
<div class="a" style="left:1584.00px;top:1006.90px;font-size:14px;line-height:1;letter-spacing:0.102px;color:#3a3a55;">09/01/2023</div>
<div class="a" style="left:1675.25px;top:1006.90px;font-size:14px;line-height:1;letter-spacing:0.098px;color:#3a3a55;">Version : 2.5.1.4</div>
<div class="a" style="left:1797.50px;top:1006.90px;font-size:14px;line-height:1;letter-spacing:-0.556px;color:#3a3a55;">Example Company</div>
</body></html>
